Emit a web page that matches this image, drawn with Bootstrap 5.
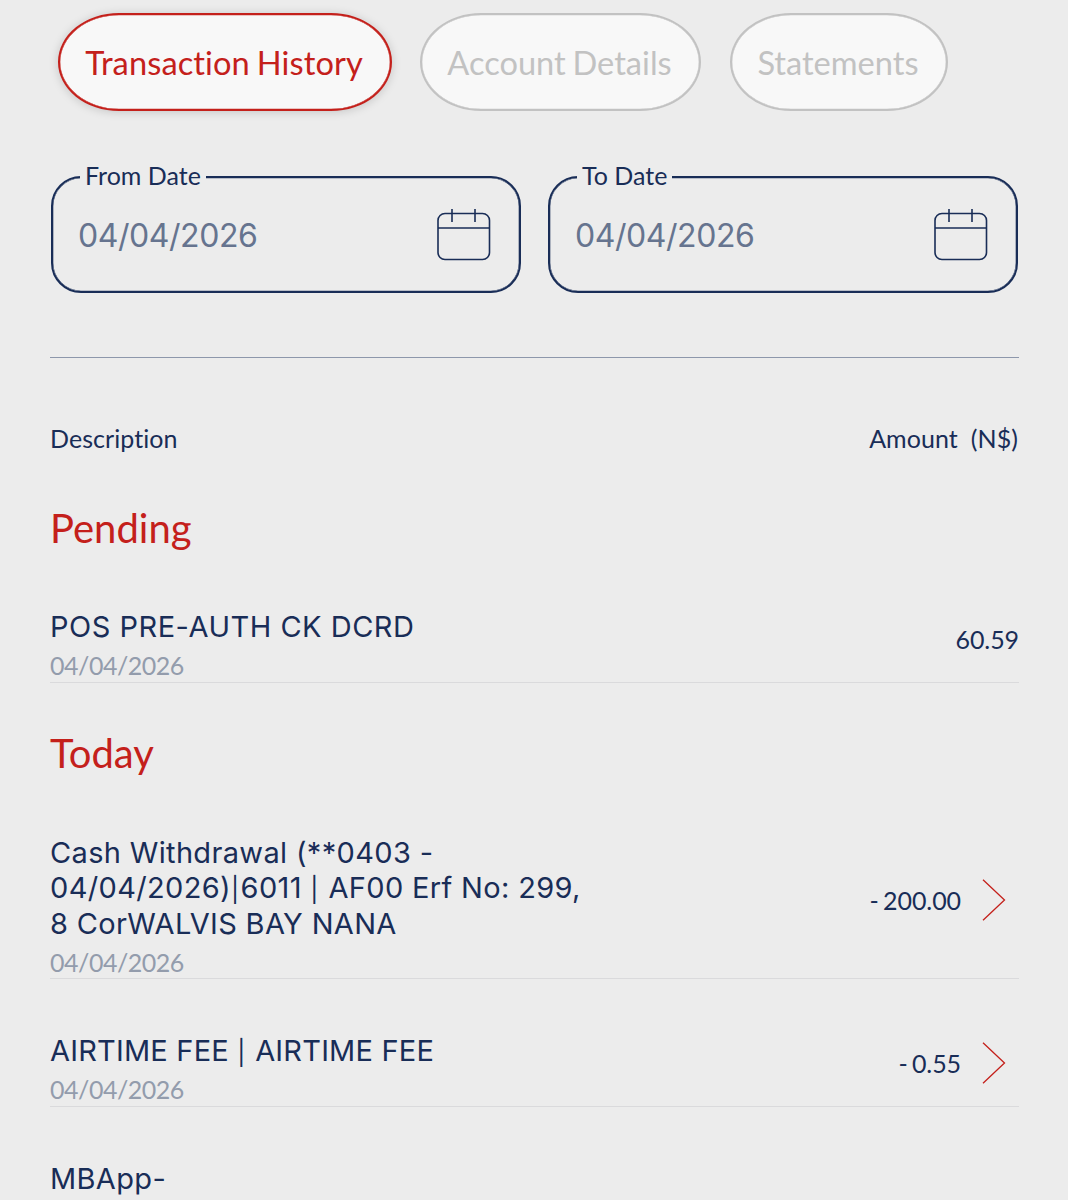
<!DOCTYPE html>
<html lang="en">
<head>
<meta charset="utf-8">
<meta name="viewport" content="width=device-width, initial-scale=1">
<title>Transaction History</title>
<link href="https://cdn.jsdelivr.net/npm/bootstrap@5.3.0/dist/css/bootstrap.min.css" rel="stylesheet">
<style>
  :root { --navy: #192d57; --brand: #c4201b; }
  body { background: #ececec; color: var(--navy); font-family: Lato, "Liberation Sans", sans-serif; font-variant-ligatures: none; height: 1200px; overflow: hidden; }
  .screen { padding: 13px 49px 0 50px; }
  .pills { gap: 28px; padding-left: 8px; }
  .pill { height: 98px; border: 2px solid #c2c2c2; border-radius: 61px / 49px; background: #f8f8f8; color: #c2c2c2; font-size: 32.6px; font-variant-ligatures: none; line-height: 1; padding: 2px 2px 0 0; white-space: nowrap; word-spacing: -1.5px; box-shadow: inset 0 0 0 .3px #c2c2c2; }
  .pill-history { width: 334px; letter-spacing: .1px; }
  .pill-details { width: 281px; }
  .pill-statements { width: 218px; margin-left: 1px; }
  .pill.active { color: var(--brand); border-color: var(--brand); background: #f8f8f8; box-shadow: inset 0 0 0 .3px var(--brand), 0 1px 10px rgba(0,0,0,.17); }
  .dates { margin-top: 65px; gap: 27px; padding: 0 1px; }
  .date-box { position: relative; height: 117px; border: 2px solid var(--navy); box-shadow: inset 0 0 0 .3px var(--navy); border-radius: 30px; padding: 2px 28px 0 25px; }
  .date-box label { position: absolute; left: 27px; top: -18px; background: #ececec; padding: 0 5px; font-size: 25px; line-height: 30px; white-space: nowrap; }
  .date-value { font-family: Inter, sans-serif; font-size: 32px; color: #66748f; line-height: 40px; letter-spacing: -.45px; }
  .cal { width: 54px; height: 54px; }
  .rule { height: 1px; background: #8d97ab; margin-top: 64px; }
  .heads { margin-top: 64px; padding-right: 1px; font-size: 25px; line-height: 32px; letter-spacing: .07px; }
  .group-title { color: var(--brand); font-size: 40px; line-height: 48px; font-weight: 400; margin: 46px 0 58px; }
  .group-title.first { margin: 50px 0 57px; }
  .txn { border-bottom: 1px solid #dadadc; padding-bottom: .5px; }
  .txn + .txn, .txn + .desc { margin-top: 54px; }
  .desc { font-family: Inter, sans-serif; font-size: 29px; line-height: 35.6px; letter-spacing: .34px; white-space: nowrap; margin-bottom: 4.5px; }
  .desc.wide { letter-spacing: .5px; }
  .desc.tight { letter-spacing: .2px; }
  .bar { font-size: .84em; line-height: 1; margin-right: 1.2px; }
  .when { font-size: 25px; line-height: 33px; color: #939cac; letter-spacing: -.47px; margin-bottom: -1px; }
  .side { padding-bottom: 12px; }
  .amount { font-size: 25px; line-height: 32px; word-spacing: -2px; letter-spacing: -.08px; }
  .chev { width: 24px; height: 42px; margin: 0 13px 0 21px; }
</style>
</head>
<body>
<main class="screen">
  <nav class="pills d-flex">
    <button class="btn pill pill-history active">Transaction History</button>
    <button class="btn pill pill-details">Account Details</button>
    <button class="btn pill pill-statements">Statements</button>
  </nav>

  <section class="dates d-flex">
    <div class="date-box flex-fill d-flex align-items-center justify-content-between">
      <label>From Date</label>
      <span class="date-value">04/04/2026</span>
      <svg class="cal" viewBox="0 0 54 54" fill="none" stroke="#192d57" stroke-width="1.6"><rect x="1" y="4.500" width="51.500" height="46" rx="7"/><path d="M1 19h51.500M15 0v13M38 0v13"/></svg>
    </div>
    <div class="date-box flex-fill d-flex align-items-center justify-content-between">
      <label>To Date</label>
      <span class="date-value">04/04/2026</span>
      <svg class="cal" viewBox="0 0 54 54" fill="none" stroke="#192d57" stroke-width="1.6"><rect x="1" y="4.500" width="51.500" height="46" rx="7"/><path d="M1 19h51.500M15 0v13M38 0v13"/></svg>
    </div>
  </section>

  <div class="rule"></div>

  <div class="heads d-flex justify-content-between">
    <span>Description</span>
    <span>Amount&nbsp; (N$)</span>
  </div>

  <h2 class="group-title first">Pending</h2>
  <div class="txn d-flex justify-content-between">
    <div><div class="desc wide">POS PRE-AUTH CK DCRD</div><div class="when">04/04/2026</div></div>
    <div class="side d-flex align-items-center"><span class="amount">60.59</span></div>
  </div>

  <h2 class="group-title">Today</h2>
  <div class="txn d-flex justify-content-between">
    <div><div class="desc">Cash Withdrawal (**0403 -<br>04/04/2026)<span class="bar">|</span>6011 <span class="bar">|</span> AF00 Erf No: 299,<br>8 CorWALVIS BAY NANA</div><div class="when">04/04/2026</div></div>
    <div class="side d-flex align-items-center"><span class="amount">- 200.00</span>
      <svg class="chev" viewBox="0 0 24 42" fill="none" stroke="#c4201b" stroke-width="1.3"><path d="M1 .7 22.500 21 1 41.300"/></svg></div>
  </div>
  <div class="txn d-flex justify-content-between">
    <div><div class="desc tight">AIRTIME FEE <span class="bar">|</span> AIRTIME FEE</div><div class="when">04/04/2026</div></div>
    <div class="side d-flex align-items-center"><span class="amount">- 0.55</span>
      <svg class="chev" viewBox="0 0 24 42" fill="none" stroke="#c4201b" stroke-width="1.3"><path d="M1 .7 22.500 21 1 41.300"/></svg></div>
  </div>
  <div class="desc">MBApp-</div>
</main>
<script src="https://cdn.jsdelivr.net/npm/bootstrap@5.3.0/dist/js/bootstrap.bundle.min.js"></script>
</body>
</html>
